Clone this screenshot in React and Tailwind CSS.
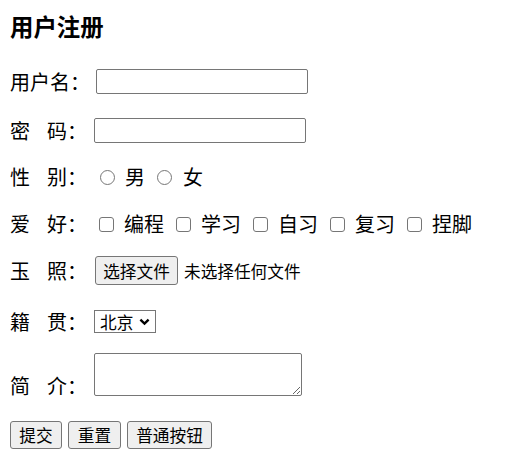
import React from "react";

function Label2({ a, b }) {
  return (
    <div className="flex w-[84px] shrink-0 leading-[20px]">
      <span>{a}</span>
      <span className="ml-[17px]">{b}：</span>
    </div>
  );
}

function Check({ text, first }) {
  return (
    <>
      <input
        type="checkbox"
        className={`${first ? "ml-[5px]" : "ml-[12px]"} w-[15px] h-[15px] appearance-none rounded-[3px] border border-[#767676] bg-white shrink-0`}
      />
      <span className="ml-[10px]">{text}</span>
    </>
  );
}

export default function App() {
  return (
    <div className="w-[506px] h-[464px] bg-white text-black px-[10px] font-['Noto_Sans_CJK_SC',sans-serif] text-[20px] flex flex-col">
      <h3 className="mt-[12px] h-[28px] text-[23.4px] leading-[28px] font-bold">用户注册</h3>

      {/* 用户名 */}
      <div className="mt-[29px] h-[25px] flex items-center">
        <div className="w-[86px] shrink-0 leading-[20px]">用户名：</div>
        <input type="text" className="w-[212px] h-[25px] border border-[#767676] rounded-[2px] bg-white" />
      </div>

      {/* 密码 */}
      <div className="mt-[24px] h-[25px] flex items-center">
        <Label2 a="密" b="码" />
        <input type="password" className="w-[212px] h-[25px] border border-[#767676] rounded-[2px] bg-white" />
      </div>

      {/* 性别 */}
      <div className="mt-[21px] h-[26px] flex items-center">
        <Label2 a="性" b="别" />
        <input type="radio" name="sex" className="ml-[6px] w-[15px] h-[15px] appearance-none rounded-full border border-[#767676] bg-white shrink-0" />
        <span className="ml-[10px] leading-[20px]">男</span>
        <input type="radio" name="sex" className="ml-[12px] w-[15px] h-[15px] appearance-none rounded-full border border-[#767676] bg-white shrink-0" />
        <span className="ml-[11px] leading-[20px]">女</span>
      </div>

      {/* 爱好 */}
      <div className="mt-[21px] h-[26px] flex items-center leading-[20px]">
        <Label2 a="爱" b="好" />
        <Check text="编程" first />
        <Check text="学习" />
        <Check text="自习" />
        <Check text="复习" />
        <Check text="捏脚" />
      </div>

      {/* 玉照 */}
      <div className="mt-[19px] h-[29px] flex items-center">
        <Label2 a="玉" b="照" />
        <button className="ml-[1px] w-[83px] h-[29px] bg-[#efefef] border border-[#767676] rounded-[3px] text-[16.67px] leading-[20px]">
          选择文件
        </button>
        <span className="ml-[6px] text-[16.67px] leading-[20px]">未选择任何文件</span>
      </div>

      {/* 籍贯 */}
      <div className="mt-[25px] h-[23px] flex items-center">
        <Label2 a="籍" b="贯" />
        <div className="w-[62px] h-[23px] border border-[#767676] bg-white flex items-center pl-[5px] text-[16.67px] leading-[20px]">
          <span>北京</span>
          <svg className="ml-[6px]" width="11" height="8" viewBox="0 0 11 8">
            <path d="M1.4 1.6 L5.5 5.6 L9.6 1.6" fill="none" stroke="#000" strokeWidth="2.4" />
          </svg>
        </div>
      </div>

      {/* 简介 */}
      <div className="mt-[20px] h-[43px] flex items-end">
        <Label2 a="简" b="介" />
        <textarea className="w-[208px] h-[43px] border border-[#767676] rounded-[2px] bg-white" />
      </div>

      {/* 按钮 */}
      <div className="mt-[25px] h-[28px] flex items-center gap-[6px] text-[16.67px] leading-[20px]">
        <button className="w-[52px] h-[28px] bg-[#efefef] border border-[#767676] rounded-[3px]">提交</button>
        <button className="w-[53px] h-[28px] bg-[#efefef] border border-[#767676] rounded-[3px]">重置</button>
        <button className="w-[85px] h-[28px] bg-[#efefef] border border-[#767676] rounded-[3px]">普通按钮</button>
      </div>
    </div>
  );
}
